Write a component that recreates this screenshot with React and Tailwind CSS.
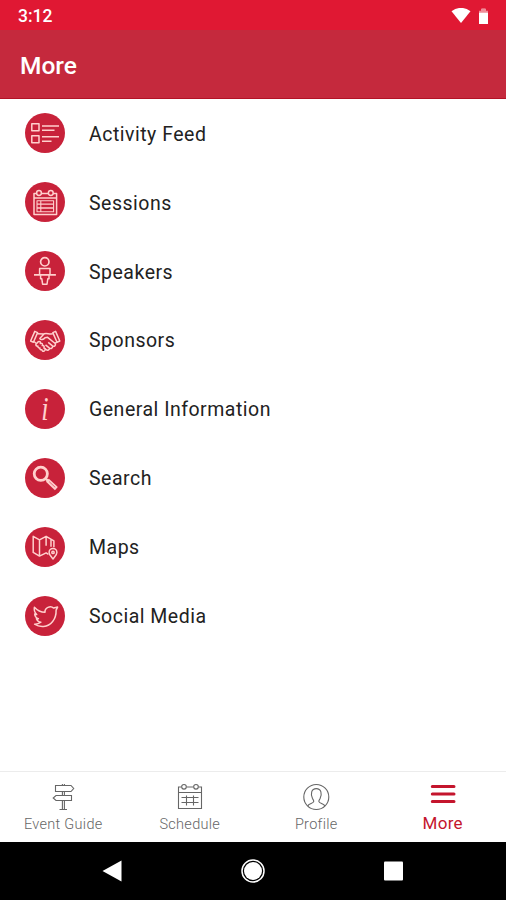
const menu = [
    { label: "Activity Feed", Icon: FeedIcon },
    { label: "Sessions", Icon: SessionsIcon },
    { label: "Speakers", Icon: SpeakerIcon },
    { label: "Sponsors", Icon: HandshakeIcon },
    { label: "General Information", Icon: InfoIcon },
    { label: "Search", Icon: SearchIcon },
    { label: "Maps", Icon: MapIcon },
    { label: "Social Media", Icon: BirdIcon },
];

const tabs = [
    { label: "Event Guide", Icon: SignpostIcon },
    { label: "Schedule", Icon: CalendarIcon },
    { label: "Profile", Icon: ProfileIcon },
    { label: "More", Icon: BarsIcon, active: true },
];

function RoundIcon({ children }) {
    return (
        <svg className="size-10 rounded-full bg-[#c8223a] text-[#ffd0cd]" viewBox="0 0 40 40" fill="none"
            stroke="currentColor" strokeWidth="1.5" strokeLinejoin="round">
            {children}
        </svg>
    );
}

function FeedIcon() {
    return (
        <RoundIcon>
            <path d="M6.8 10.8H14v7H6.8zM6.8 22.7H14v7H6.8z" />
            <path d="M17 13h17M17 17.2h12.5M17 23.7h17M17 28.2h9.5" />
        </RoundIcon>
    );
}

function SessionsIcon() {
    return (
        <RoundIcon>
            <path d="M11.7 11.5H9v21h22.6v-21H28M16.3 11.5h7M9 16h22.6" />
            <circle cx="14" cy="11" r="2.4" />
            <circle cx="25.8" cy="11" r="2.4" />
            <path d="M12 18.8h16.6v11H12zM15.8 18.8v11" strokeWidth="1.1" />
            <path d="M12 22.2h16.6M12 26h16.6" strokeWidth="1.3" />
        </RoundIcon>
    );
}

function SpeakerIcon() {
    return (
        <RoundIcon>
            <circle cx="19.8" cy="10.8" r="4.2" strokeWidth="1.7" />
            <path d="M14.6 23.3v-5.8H25v5.8" />
            <path d="M9 23.8h21.9" strokeWidth="1.8" />
            <path d="M15.6 24v3.8h1.2l.8 5.4h4.4l.8-5.4H24V24" />
        </RoundIcon>
    );
}

function HandshakeIcon() {
    return (
        <RoundIcon>
            <path d="M9.8 11.4L5.6 21l2.8 1.2 4.2-9.6zM30.6 11.4l4.2 9.6-2.8 1.2-4.2-9.6z" />
            <path d="M12.6 13.8l6.2.3M27.8 13.8c-4 .5-6-.8-8.6 0l-4.4 4.7c.8 1.8 3.6 1.2 5.2-.8l2.6-.4 7.6 6.2 1.8-1.6" />
            <path d="M9 21.5l2.4 2M30.2 23.5c1 2-1 3.4-2.7 2.4.6 2-1.4 3.2-3 2.2 0 2-2 2.6-3.4 1.5l-1.5-1.2M27.5 25.9l-4.3-3.5M24.5 28.1l-4-3.2" />
            <path d="M11 24.2l2.2-2.4c1.8-.8 2.8.5 2.1 1.7 1.8-.6 2.8.8 1.9 2.1 1.8-.3 2.6 1.2 1.6 2.4 1.5.2 2 1.5.9 2.5l-.7.6c-1 .6-2-.2-2.1-1.4-1.2.5-2.4-.5-2-1.8-1.4.2-2.3-.6-1.9-1.8-1.6.2-2.6-.8-2-1.9z" />
        </RoundIcon>
    );
}

function InfoIcon() {
    return (
        <RoundIcon>
            <text x="25" y="31" textAnchor="middle" fill="currentColor" stroke="none" transform="scale(.8 1)"
                className="font-['Liberation_Serif',serif] text-[33px] italic">i</text>
        </RoundIcon>
    );
}

function SearchIcon() {
    return (
        <RoundIcon>
            <circle cx="15.8" cy="15.8" r="6.6" strokeWidth="2.8" />
            <path d="M20.6 20.6l2.4 2.2" strokeWidth="2.5" />
            <path d="M22.4 22.2l9 8.4" strokeWidth="4.2" />
            <path d="M24.2 23.7l6 5.6" className="text-[#dd6875]" strokeWidth="1" />
        </RoundIcon>
    );
}

function MapIcon() {
    return (
        <RoundIcon>
            <path d="M23.5 27.3l-2.4-1.5-6.6 3.3L8.2 25.4V9.3l6.3 3.6 6.6-3.6 7.8 4.6v6.3M14.5 12.9v16.2M21.1 9.3v9.5M26 12.4v7.4" />
            <path d="M28 32c-2-2.7-3.9-4.4-3.9-6.6a3.9 3.9 0 0 1 7.8 0c0 2.2-1.9 3.9-3.9 6.6z" />
            <circle cx="28" cy="25.4" r="1.2" />
        </RoundIcon>
    );
}

function BirdIcon() {
    return (
        <RoundIcon>
            <path d="M9.4 11.2c2.9 3.2 6.4 5 10.6 5.1-.4-4.7 5.4-7.1 8.7-4.2l3.9-1-1.5 3.1c.3 8.9-5.3 15.8-12.5 16.3-3.4.3-6.5-.6-9-2.3 2.7.1 4.6-.7 6.3-2-2.4-.2-3.8-1.5-4.5-3.4h2c-2.3-.9-3.6-2.6-3.7-4.8l2 .5c-2.1-1.9-2.9-4.3-2.3-7.3z" />
        </RoundIcon>
    );
}

function TabIcon({ children }) {
    return (
        <svg className="size-7" viewBox="0 0 28 28" fill="none" stroke="currentColor" strokeWidth="1.1">
            {children}
        </svg>
    );
}

function SignpostIcon() {
    return (
        <TabIcon>
            <path d="M6.5 2.5H22l2.7 3-2.7 3H6.5zM22.5 12.5v5H7L4.2 15 7 12.5z" />
            <path d="M13.4 1v1.5M15.4 1v1.5M13.4 8.5v4M15.4 8.5v4M13.4 17.5v9M15.4 17.5v9M10.5 26.5H18" />
        </TabIcon>
    );
}

function CalendarIcon() {
    return (
        <TabIcon>
            <path d="M5.5 4h-3v21.5h23V4h-3M10.5 4h7M2.5 9.5h23" />
            <circle cx="8" cy="3.8" r="2.3" />
            <circle cx="20" cy="3.8" r="2.3" />
            <path d="M5.5 14.5h17M5.5 19.5h17M10.5 12.5v10M17.5 12.5v10" />
        </TabIcon>
    );
}

function ProfileIcon() {
    return (
        <TabIcon>
            <circle cx="14.3" cy="14" r="12.5" />
            <path d="M5.8 23c.8-2.2 5.5-2.6 5.9-4.3.3-1.3-.5-1.9-1.2-3.1-2.2-4.6-1.2-10 3.8-10s6 5.4 3.8 10c-.7 1.2-1.5 1.8-1.2 3.1.4 1.7 5.1 2.1 5.9 4.3" />
        </TabIcon>
    );
}

function BarsIcon() {
    return (
        <TabIcon>
            <path d="M3.3 3.5H25M3.3 11H25M3.3 18.5H25" strokeWidth="3" strokeLinecap="round" />
        </TabIcon>
    );
}

export default function App() {
    return (
        <div className="flex h-[900px] w-[506px] flex-col overflow-hidden bg-white font-[Roboto,sans-serif]">
            <div className="flex h-[30px] items-center justify-between bg-[#e01833] pt-0.5 pr-[17px] pl-[18px] text-white">
                <span className="text-[17.5px] font-medium">3:12</span>
                <svg className="h-[17px] w-[38px]" viewBox="0 0 38 17" fill="currentColor">
                    <path d="M.5 3.2Q10-3.5 19.5 3.2L10 15z" />
                    <path d="M28 3h2.500V.8h4V3H37v13h-9z" />
                    <path d="M28 2.800h2.500V.8h4v2H37v2h-9z" fill="#f08b98" />
                </svg>
            </div>

            <header className="flex h-[69px] items-center border-b border-[#b31226] bg-[#c5293d] pt-1 pl-5">
                <h1 className="text-[24.5px] font-medium text-white">More</h1>
            </header>

            <ul className="flex flex-1 flex-col">
                {menu.map(({ label, Icon }) => (
                    <li key={label} className="flex h-[68.9px] items-center gap-6 pl-[25px]">
                        <Icon />
                        <span className="pt-0.5 text-[19.5px] tracking-[0.5px] text-[#222222]">{label}</span>
                    </li>
                ))}
            </ul>

            <nav className="flex h-[71px] border-t border-[#ececec]">
                {tabs.map(({ label, Icon, active }) => (
                    <button key={label}
                        className={"flex flex-1 flex-col items-center pt-[11px] " + (active ? "text-[#c4152d]" : "text-[#666666]")}>
                        <Icon />
                        <span className={active ? "text-[17px] leading-6 tracking-[0.3px]" : "text-[14.5px] leading-7 font-light tracking-[0.3px]"}>
                            {label}
                        </span>
                    </button>
                ))}
            </nav>

            <div className="flex h-[58px] items-center bg-black pl-[102px] text-white">
                <svg className="h-6 w-[302px]" viewBox="0 0 302 24" fill="currentColor">
                    <path d="M.5 12l19-10.5v21z" />
                    <circle cx="151" cy="12" r="9" />
                    <circle cx="151" cy="12" r="11" fill="none" stroke="currentColor" strokeWidth="1.5" />
                    <rect x="282" y="2.5" width="19" height="19" rx="1" />
                </svg>
            </div>
        </div>
    );
}
